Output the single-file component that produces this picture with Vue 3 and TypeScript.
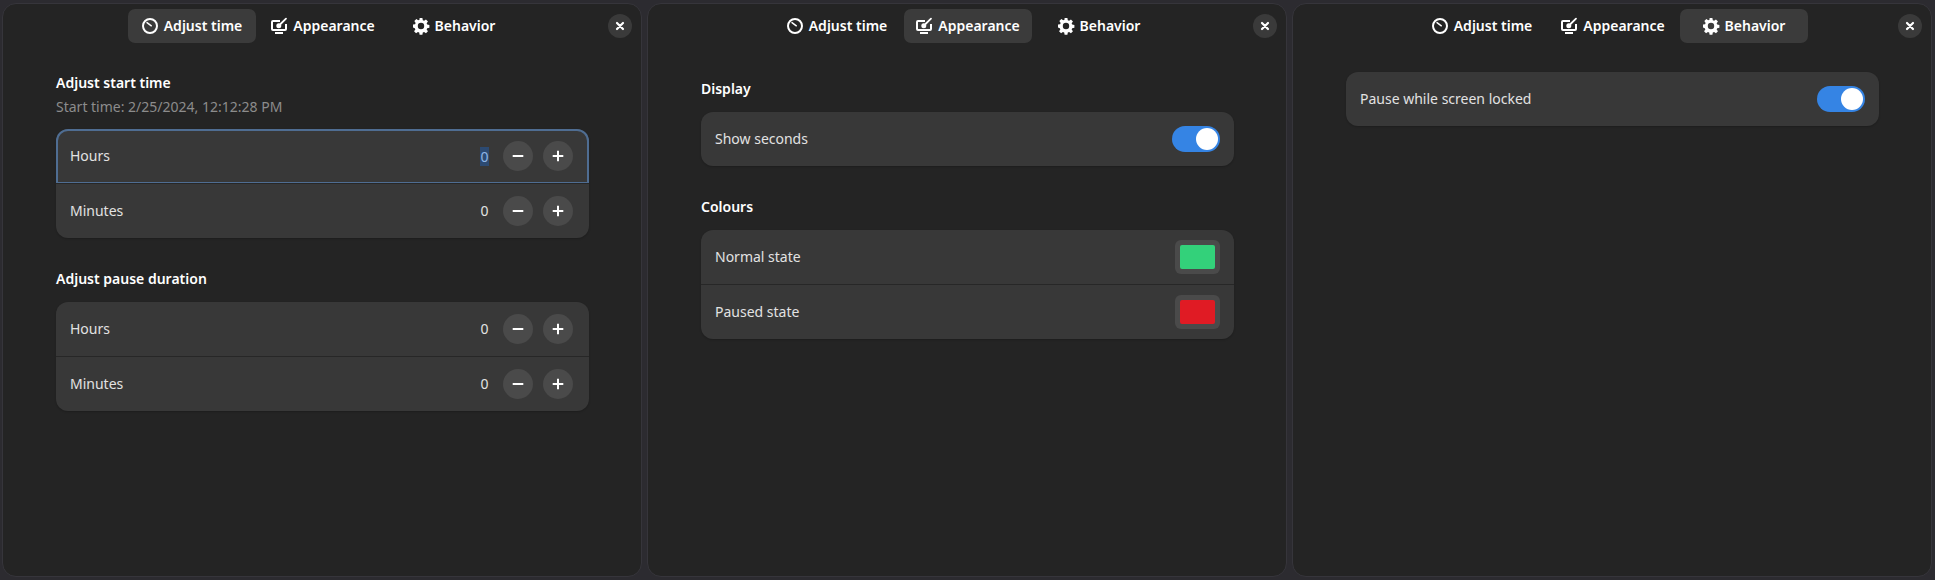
<template>
  <div class="desk">
    <section v-for="(panel, i) in panels" :key="panel" class="panel">
      <header class="head">
        <nav class="tabs">
          <button v-for="tab in tabs" :key="tab.name" :class="['tab', tab.name === panel && 'tab--on']">
            <svg class="icon" viewBox="0 0 16 16" v-html="tab.icon" />
            <span class="tab-label">{{ tab.name }}</span>
          </button>
        </nav>
        <button class="close">
          <svg viewBox="0 0 16 16" width="16" height="16">
            <path d="M5 5l6 6M11 5l-6 6" stroke="#fff" stroke-width="2.2" stroke-linecap="round" fill="none" />
          </svg>
        </button>
      </header>

      <!-- Adjust time -->
      <div v-if="i === 0" class="page">
        <div class="block">
          <h3 class="title">Adjust start time</h3>
          <p class="sub">Start time: 2/25/2024, 12:12:28 PM</p>
          <div class="group">
            <div class="row row--focus">
              <span class="label">Hours</span>
              <span class="spin-value"><span class="selected">0</span></span>
              <button class="round"><svg viewBox="0 0 16 16" v-html="minus" /></button>
              <button class="round"><svg viewBox="0 0 16 16" v-html="plus" /></button>
            </div>
            <div class="row">
              <span class="label">Minutes</span>
              <span class="spin-value">0</span>
              <button class="round"><svg viewBox="0 0 16 16" v-html="minus" /></button>
              <button class="round"><svg viewBox="0 0 16 16" v-html="plus" /></button>
            </div>
          </div>
        </div>
        <div class="block">
          <h3 class="title">Adjust pause duration</h3>
          <div class="group">
            <div v-for="unit in ['Hours', 'Minutes']" :key="unit" class="row">
              <span class="label">{{ unit }}</span>
              <span class="spin-value">0</span>
              <button class="round"><svg viewBox="0 0 16 16" v-html="minus" /></button>
              <button class="round"><svg viewBox="0 0 16 16" v-html="plus" /></button>
            </div>
          </div>
        </div>
      </div>

      <!-- Appearance -->
      <div v-else-if="i === 1" class="page page--look">
        <div class="block">
          <h3 class="title">Display</h3>
          <div class="group">
            <div class="row">
              <span class="label">Show seconds</span>
              <span class="switch"><i /></span>
            </div>
          </div>
        </div>
        <div class="block">
          <h3 class="title">Colours</h3>
          <div class="group">
            <div class="row">
              <span class="label">Normal state</span>
              <span class="swatch"><i class="green" /></span>
            </div>
            <div class="row">
              <span class="label">Paused state</span>
              <span class="swatch"><i class="red" /></span>
            </div>
          </div>
        </div>
      </div>

      <!-- Behavior -->
      <div v-else class="page">
        <div class="group">
          <div class="row">
            <span class="label">Pause while screen locked</span>
            <span class="switch"><i /></span>
          </div>
        </div>
      </div>
    </section>
  </div>
</template>

<script setup lang="ts">
const panels = ['Adjust time', 'Appearance', 'Behavior']

const minus = '<path d="M2.700 8h10.600" stroke="currentColor" stroke-width="2" />'
const plus = '<path d="M2.700 8h10.600M8 2.700v10.600" stroke="currentColor" stroke-width="2" />'

const tabs = [
  {
    name: 'Adjust time',
    icon: '<circle cx="8" cy="8" r="7" fill="none" stroke="currentColor" stroke-width="2"/><path d="M5 4.600l4.300 3.200" fill="none" stroke="currentColor" stroke-width="1.500" stroke-linecap="round"/>',
  },
  {
    name: 'Appearance',
    icon: '<path d="M9 3H2a1 1 0 0 0-1 1v7a1 1 0 0 0 1 1h12a1 1 0 0 0 1-1V6" fill="none" stroke="currentColor" stroke-width="2"/><path d="M15 .6L9.500 6" fill="none" stroke="currentColor" stroke-width="1.800" stroke-linecap="round"/><circle cx="7.800" cy="7.700" r="2.500" fill="currentColor"/><path d="M4 14h8v2H4z" fill="currentColor"/>',
  },
  {
    name: 'Behavior',
    icon: '<path fill-rule="evenodd" fill="currentColor" d="M6.600 0h2.800l.4 2.200 1.300.55 1.850-1.300 2 2-1.300 1.850.55 1.300 2.200.4v2.800l-2.200.4-.55 1.300 1.300 1.850-2 2-1.850-1.300-1.300.55-.4 2.200H6.600l-.4-2.200-1.300-.55-1.850 1.300-2-2 1.300-1.850-.55-1.300L0 9.400V6.600l2.100-.4.55-1.300-1.300-1.850 2-2 1.850 1.300 1.300-.55zM8 4.800a3.200 3.200 0 1 0 0 6.400 3.200 3.200 0 0 0 0-6.400z"/>',
  },
]
</script>

<style>
html, body {
  margin: 0;
  background: #2c2b30;
}
</style>

<style scoped>
.desk {
  display: flex;
  gap: 5px;
  padding: 3px 2px;
  height: 580px;
  box-sizing: border-box;
  overflow: hidden;
  font-family: "Noto Sans", sans-serif;
  font-size: 14px;
  color: #fff;
}

.panel {
  flex: 0 0 640px;
  box-sizing: border-box;
  background: #242424;
  border: 1px solid #36353b;
  border-radius: 14px;
  height: 574px;
}

.head {
  height: 44px;
  position: relative;
  display: flex;
  justify-content: center;
  align-items: flex-start;
  padding: 5px 0 0 2px;
  box-sizing: border-box;
}

.tabs {
  display: flex;
  gap: 3px;
}

.tab {
  width: 128px;
  height: 34px;
  border: 0;
  border-radius: 7px;
  background: transparent;
  color: #fff;
  font: inherit;
  font-weight: 600;
  display: flex;
  align-items: center;
  justify-content: center;
  gap: 6px;
  padding: 0;
}

.tab-label {
  padding-bottom: 2px;
}

.tab--on {
  background: #3b3b3b;
}

.icon {
  width: 16px;
  height: 16px;
  flex: none;
  overflow: visible;
}

.close {
  position: absolute;
  top: 10px;
  right: 9px;
  width: 24px;
  height: 24px;
  border: 0;
  border-radius: 50%;
  background: #3a3a3a;
  padding: 4px;
  display: flex;
}

.page {
  padding: 24px 52px 0 53px;
}

.page--look {
  padding-top: 30px;
}

.block + .block {
  margin-top: 30px;
}

.title {
  margin: 0 0 13px;
  padding-top: 1px;
  font-size: inherit;
  font-weight: 600;
  line-height: 20px;
}

.sub {
  margin: -9px 0 12px;
  line-height: 20px;
  color: #8c8c8c;
}

.group {
  background: #383838;
  border-radius: 12px;
  box-shadow: 0 1px 2px rgba(0, 0, 0, 0.2);
}

.row {
  height: 54px;
  box-sizing: border-box;
  padding: 0 16px 0 14px;
  display: flex;
  align-items: center;
  gap: 10px;
  color: #e2e2e2;
  position: relative;
}

.row + .row {
  height: 55px;
  border-top: 1px solid #272727;
}

.label {
  flex: 1;
  padding-bottom: 2px;
}

.row--focus::after {
  content: "";
  position: absolute;
  inset: 0 0 -1px;
  border: 2px solid #4f6d92;
  border-radius: 12px 12px 0 0;
  pointer-events: none;
}

.spin-value {
  width: 9px;
  text-align: center;
  margin-right: 4px;
  padding-bottom: 2px;
}

.selected {
  display: block;
  height: 19px;
  line-height: 19px;
  background: #2c4a72;
  color: #8fb5e6;
  margin-top: 2px;
}

.round {
  width: 30px;
  height: 30px;
  border: 0;
  border-radius: 50%;
  background: #4a4a4a;
  color: #fff;
  padding: 7px;
  display: flex;
}

.round svg {
  width: 16px;
  height: 16px;
}

.switch {
  width: 48px;
  height: 26px;
  border-radius: 13px;
  background: #3584e4;
  position: relative;
  margin-right: -2px;
}

.switch i {
  position: absolute;
  top: 2px;
  right: 2px;
  width: 22px;
  height: 22px;
  border-radius: 50%;
  background: #fff;
}

.swatch {
  width: 45px;
  height: 34px;
  box-sizing: border-box;
  padding: 5px;
  background: #4a4a4a;
  border-radius: 6px;
  margin-right: -2px;
}

.swatch i {
  display: block;
  height: 100%;
  border-radius: 2px;
}

.green {
  background: #33d17a;
}

.red {
  background: #e01b24;
}
</style>
